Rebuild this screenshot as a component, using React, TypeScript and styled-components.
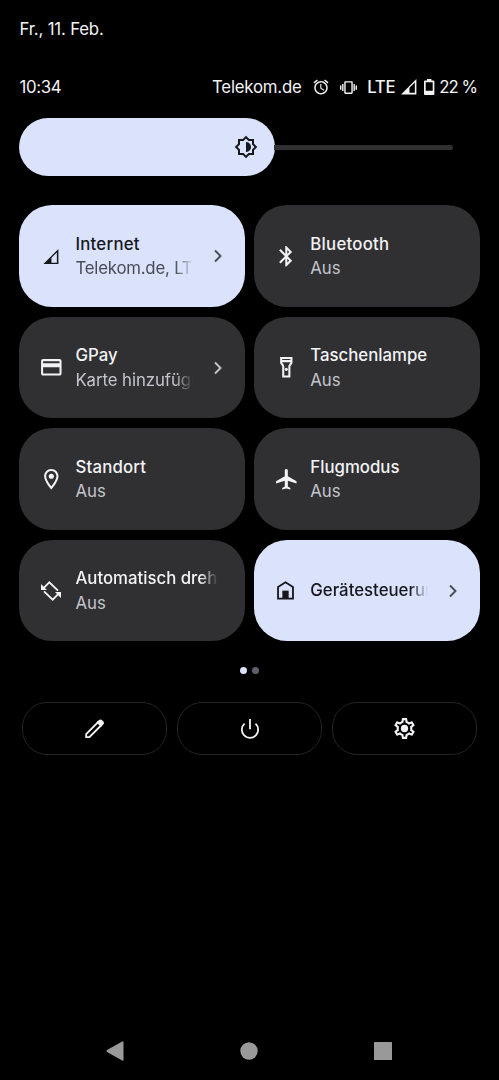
import React from "react";
import styled, { createGlobalStyle } from "styled-components";

const color = {
  accent: "#dae2fc",
  tile: "#303032",
  text: "#f3f3f5",
  muted: "#c4c4ce",
  dark: "#17181c",
  darkMuted: "#494c55",
  nav: "#999999",
};

const Global = createGlobalStyle`
  html, body { margin: 0; background: #000; }
  * { box-sizing: border-box; }
`;

const Screen = styled.main`
  display: flex;
  flex-direction: column;
  width: 499px;
  height: 1080px;
  overflow: hidden;
  background: #000;
  color: ${color.text};
  font-family: Inter, Roboto, sans-serif;
  font-size: 16.8px;
`;

const Label = styled.span<{ $spacing?: number }>`
  letter-spacing: ${(p) => p.$spacing ?? 0}px;
  white-space: nowrap;
`;

const DateRow = styled.header`
  height: 58px;
  padding: 0 19.5px;
  line-height: 58px;
`;

const StatusRow = styled.div`
  display: flex;
  align-items: center;
  justify-content: space-between;
  height: 58px;
  padding: 0 22px 0 19.5px;
`;

const StatusIcons = styled.div`
  display: flex;
  align-items: center;
`;

const Gap = styled.i<{ $w: number }>`
  flex: none;
  width: ${(p) => p.$w}px;
`;

const Slider = styled.div`
  display: flex;
  align-items: center;
  height: 58px;
  margin: 2.3px 46px 0 19.3px;
`;

const SliderFill = styled.div`
  display: flex;
  align-items: center;
  justify-content: flex-end;
  width: 256px;
  height: 58px;
  padding-right: 17px;
  border-radius: 29px;
  background: ${color.accent};
  color: ${color.dark};
`;

const SliderTrack = styled.div`
  flex: 1;
  height: 5px;
  margin-left: -1px;
  border-radius: 0 3px 3px 0;
  background: #303030;
`;

const Tiles = styled.section`
  display: grid;
  grid-template-columns: 1fr 1fr;
  grid-auto-rows: 101.5px;
  gap: 10px 9.6px;
  margin: 29.2px 19.4px 0;
`;

const TileBox = styled.div<{ $on?: boolean }>`
  display: flex;
  align-items: center;
  min-width: 0;
  padding: 0 18px 0 19px;
  border-radius: 33px;
  background: ${(p) => (p.$on ? color.accent : color.tile)};
  color: ${(p) => (p.$on ? color.dark : color.text)};
`;

const IconSlot = styled.div`
  display: flex;
  flex: none;
  justify-content: center;
  width: 25px;
  margin-right: 12px;
`;

const TileText = styled.div<{ $chevron?: boolean }>`
  display: flex;
  flex: none;
  flex-direction: column;
  width: ${(p) => (p.$chevron ? 118 : 143)}px;
`;

const Line = styled.div<{ $fade?: boolean; $title?: boolean; $on?: boolean }>`
  overflow: hidden;
  height: 24.6px;
  font-size: 16.8px;
  line-height: 24.6px;
  font-weight: ${(p) => (p.$title ? 500 : 400)};
  color: ${(p) => (p.$title ? "inherit" : p.$on ? color.darkMuted : color.muted)};
  mask-image: ${(p) => (p.$fade ? "linear-gradient(to right, #000 calc(100% - 18px), transparent)" : "none")};
`;

const Chevron = styled.svg<{ $on?: boolean }>`
  width: 8px;
  height: 14px;
  margin-left: auto;
  margin-right: 4.5px;
  fill: none;
  stroke: ${(p) => (p.$on ? color.darkMuted : color.muted)};
  stroke-width: 1.9px;
`;

const Pager = styled.div`
  display: flex;
  justify-content: center;
  gap: 4.6px;
  margin-top: 25.8px;
`;

const Dot = styled.i<{ $active?: boolean }>`
  width: 7px;
  height: 7px;
  border-radius: 50%;
  background: ${(p) => (p.$active ? color.accent : "#5f606c")};
`;

const Actions = styled.div`
  display: grid;
  grid-template-columns: repeat(3, 1fr);
  gap: 10px;
  margin: 28px 22px 0;
`;

const Action = styled.div`
  display: flex;
  align-items: center;
  justify-content: center;
  height: 53px;
  border: 1px solid #242424;
  border-radius: 25px;
`;

const NavBar = styled.nav`
  display: flex;
  align-items: center;
  justify-content: space-between;
  height: 58px;
  margin-top: auto;
  padding: 0 106.5px 0 105.5px;
  fill: ${color.nav};
`;

const Glyph = ({ d, size = 24.6, children }: { d?: string; size?: number; children?: React.ReactNode }) => (
  <svg width={size} height={size} viewBox="0 0 24 24" fill="currentColor">
    {d && <path fillRule="evenodd" d={d} />}
    {children}
  </svg>
);

const paths = {
  brightness:
    "M20 15.31L23.31 12 20 8.69V4h-4.69L12 .69 8.69 4H4v4.69L.69 12 4 15.31V20h4.69L12 23.31 15.31 20H20v-4.69zM18 14.48V18h-3.52L12 20.48 9.52 18H6v-3.52L3.52 12 6 9.52V6h3.52L12 3.52 14.48 6H18v3.52L20.48 12 18 14.48zM12 7v10c2.76 0 5-2.24 5-5s-2.24-5-5-5z",
  bluetooth:
    "M17.71 7.71L12 2h-1v7.59L6.41 5 5 6.41 10.59 12 5 17.59 6.41 19 11 14.41V22h1l5.71-5.71-4.3-4.29 4.3-4.29zM13 5.83l1.88 1.88L13 9.59V5.83zm1.88 10.46L13 18.17v-3.76l1.88 1.88z",
  card: "M20 4H4c-1.11 0-1.99.89-1.99 2L2 18c0 1.11.89 2 2 2h16c1.11 0 2-.89 2-2V6c0-1.11-.89-2-2-2zm0 14H4v-6h16v6zm0-10H4V6h16v2z",
  torch: "M18 2H6v6l2 3v11h8V11l2-3V2zm-2 2v1H8V4h8zm-2 6.4V20h-4v-9.6L8 7.39V7h8v.39l-2 3.01z",
  pin: "M12 2C8.13 2 5 5.13 5 9c0 5.25 7 13 7 13s7-7.75 7-13c0-3.87-3.13-7-7-7zM7 9c0-2.76 2.24-5 5-5s5 2.24 5 5c0 2.88-2.88 7.19-5 9.88C9.92 16.21 7 11.85 7 9z",
  plane:
    "M22 16v-2l-8.5-5V3.5c0-.83-.67-1.5-1.5-1.5s-1.5.67-1.5 1.5V9L2 14v2l8.5-2.5V19L8 20.5V22l4-1 4 1v-1.5L13.5 19v-5.5L22 16z",
  alarm:
    "M22 5.72l-4.6-3.86-1.29 1.53 4.6 3.86L22 5.72zM7.88 3.39L6.6 1.86 2 5.71l1.29 1.53 4.59-3.85zM12.5 8H11v6l4.75 2.85.75-1.23-4-2.37V8zM12 4c-4.97 0-9 4.03-9 9s4.02 9 9 9c4.97 0 9-4.03 9-9s-4.03-9-9-9zm0 16c-3.87 0-7-3.13-7-7s3.13-7 7-7 7 3.13 7 7-3.13 7-7 7z",
  vibrate:
    "M0 15h2V9H0v6zm3 2h2V7H3v10zm19-8v6h2V9h-2zm-3 8h2V7h-2v10zM16.5 3h-9C6.67 3 6 3.67 6 4.5v15c0 .83.67 1.5 1.5 1.5h9c.83 0 1.5-.67 1.5-1.5v-15c0-.83-.67-1.5-1.5-1.5zM16 19H8V5h8v14z",
  gear: "M19.43 12.98c.04-.32.07-.64.07-.98 0-.34-.03-.66-.07-.98l2.11-1.65c.19-.15.24-.42.12-.64l-2-3.46c-.09-.16-.26-.25-.44-.25-.06 0-.12.01-.17.03l-2.49 1c-.52-.4-1.08-.73-1.69-.98l-.38-2.65C14.46 2.18 14.25 2 14 2h-4c-.25 0-.46.18-.49.42l-.38 2.65c-.61.25-1.17.59-1.69.98l-2.49-1c-.06-.02-.12-.03-.18-.03-.17 0-.34.09-.43.25l-2 3.46c-.13.22-.07.49.12.64l2.11 1.65c-.04.32-.07.65-.07.98 0 .33.03.66.07.98l-2.11 1.65c-.19.15-.24.42-.12.64l2 3.46c.09.16.26.25.44.25.06 0 .12-.01.17-.03l2.49-1c.52.4 1.08.73 1.69.98l.38 2.65c.03.24.24.42.49.42h4c.25 0 .46-.18.49-.42l.38-2.65c.61-.25 1.17-.59 1.69-.98l2.49 1c.06.02.12.03.18.03.17 0 .34-.09.43-.25l2-3.46c.12-.22.07-.49-.12-.64l-2.11-1.65zm-1.98-1.71c.04.31.05.52.05.73 0 .21-.02.43-.05.73l-.14 1.13.89.7 1.08.84-.7 1.21-1.27-.51-1.04-.42-.9.68c-.43.32-.84.56-1.25.73l-1.06.43-.16 1.13-.2 1.35h-1.4l-.19-1.35-.16-1.13-1.06-.43c-.43-.18-.83-.41-1.23-.71l-.91-.7-1.06.43-1.27.51-.7-1.21 1.08-.84.89-.7-.14-1.13c-.03-.31-.05-.54-.05-.74s.02-.43.05-.73l.14-1.13-.89-.7-1.08-.84.7-1.21 1.27.51 1.04.42.9-.68c.43-.32.84-.56 1.25-.73l1.06-.43.16-1.13.2-1.35h1.39l.19 1.35.16 1.13 1.06.43c.43.18.83.41 1.23.71l.91.7 1.06-.43 1.27-.51.7 1.21-1.07.85-.89.7.14 1.13z",
};

const SignalIcon = () => (
  <svg width="15.4" height="15.4" viewBox="0 0 20 20">
    <path fill="currentColor" fillRule="evenodd" d="M0 20L20 0V20ZM11 11.3V18H18V4.6Z" />
  </svg>
);

const BatteryIcon = () => (
  <svg width="10.4" height="16" viewBox="0 0 10.4 16" fill="currentColor">
    <path
      fillRule="evenodd"
      d="M3 0h4.4v1.6h2a1 1 0 0 1 1 1V15a1 1 0 0 1-1 1H1a1 1 0 0 1-1-1V2.6a1 1 0 0 1 1-1h2zM1.7 3.3V11.7h7V3.3z"
    />
  </svg>
);

const RotateIcon = () => (
  <svg width="20" height="20" viewBox="0 0 60 60" fill="none" stroke="currentColor" strokeWidth="5.5">
    <path d="M7 22L25 4L51 29M9 31L35 56L53 38" />
    <path fill="currentColor" stroke="none" d="M0 9V27H18ZM60 51V33H42Z" />
  </svg>
);

const HomeIcon = () => (
  <svg width="17" height="18.6" viewBox="0 0 51 56" fill="none" stroke="currentColor" strokeWidth="5.5">
    <path d="M3 18L25.5 4L48 18V53H3Z" />
    <path fill="currentColor" stroke="none" d="M16 29H35V54H16Z" />
  </svg>
);

const PencilIcon = () => (
  <svg width="19.4" height="19.4" viewBox="0 0 58 58" fill="none" stroke="currentColor" strokeWidth="5.5">
    <path d="M3.5 54.5V45L38.500 10L48 19.500L13 54.500Z" />
    <path fill="currentColor" stroke="none" d="M34.5 10L42 3Q46.500-.5 50.500 3L55 7.500Q58.500 11.500 55 16L48 23.500Z" />
  </svg>
);

const PowerIcon = () => (
  <svg width="20" height="20" viewBox="0 0 60 60" fill="none" stroke="currentColor" strokeWidth="5.5">
    <path d="M30 0V31M13.5 14A24.5 24.5 0 1 0 46.5 14" />
  </svg>
);

type TileProps = {
  icon: React.ReactNode;
  title: string;
  subtitle?: string;
  on?: boolean;
  chevron?: boolean;
  fadeTitle?: boolean;
  fadeSubtitle?: boolean;
  titleSpacing?: number;
  subtitleSpacing?: number;
};

const Tile = (p: TileProps) => (
  <TileBox $on={p.on}>
    <IconSlot>{p.icon}</IconSlot>
    <TileText $chevron={p.chevron}>
      <Line $title $fade={p.fadeTitle}>
        <Label $spacing={p.titleSpacing}>{p.title}</Label>
      </Line>
      {p.subtitle && (
        <Line $on={p.on} $fade={p.fadeSubtitle}>
          <Label $spacing={p.subtitleSpacing}>{p.subtitle}</Label>
        </Line>
      )}
    </TileText>
    {p.chevron && (
      <Chevron $on={p.on} viewBox="0 0 8 14">
        <path d="M1 1.5L6.5 7L1 12.5" />
      </Chevron>
    )}
  </TileBox>
);

export default function App() {
  return (
    <Screen>
      <Global />
      <DateRow>
        <Label $spacing={-0.18}>Fr., 11. Feb.</Label>
      </DateRow>
      <StatusRow>
        <Label $spacing={-0.35}>10:34</Label>
        <StatusIcons>
          <Label $spacing={-0.2}>Telekom.de</Label>
          <Gap $w={10} />
          <Glyph d={paths.alarm} size={18} />
          <Gap $w={10} />
          <Glyph d={paths.vibrate} size={17} />
          <Gap $w={10.5} />
          <Line as="span" $title>
            <Label $spacing={-0.2}>LTE</Label>
          </Line>
          <Gap $w={5.8} />
          <SignalIcon />
          <Gap $w={7.5} />
          <BatteryIcon />
          <Gap $w={4.5} />
          <Label $spacing={-0.95}>22 %</Label>
        </StatusIcons>
      </StatusRow>
      <Slider>
        <SliderFill>
          <Glyph d={paths.brightness} size={24} />
        </SliderFill>
        <SliderTrack />
      </Slider>
      <Tiles>
        <Tile
          on
          chevron
          fadeSubtitle
          icon={<SignalIcon />}
          title="Internet"
          titleSpacing={0.25}
          subtitle="Telekom.de, LTE"
          subtitleSpacing={-0.2}
        />
        <Tile icon={<Glyph d={paths.bluetooth} />} title="Bluetooth" titleSpacing={0.25} subtitle="Aus" />
        <Tile
          chevron
          fadeSubtitle
          icon={<Glyph d={paths.card} />}
          title="GPay"
          subtitle="Karte hinzufügen"
          subtitleSpacing={-0.07}
        />
        <Tile
          icon={
            <Glyph d={paths.torch}>
              <circle cx="12" cy="14" r="1.5" />
            </Glyph>
          }
          title="Taschenlampe"
          subtitle="Aus"
        />
        <Tile
          icon={
            <Glyph d={paths.pin}>
              <circle cx="12" cy="9" r="2.5" />
            </Glyph>
          }
          title="Standort"
          titleSpacing={0.2}
          subtitle="Aus"
        />
        <Tile icon={<Glyph d={paths.plane} />} title="Flugmodus" subtitle="Aus" />
        <Tile fadeTitle icon={<RotateIcon />} title="Automatisch drehen" subtitle="Aus" />
        <Tile on chevron fadeTitle icon={<HomeIcon />} title="Gerätesteuerung" />
      </Tiles>
      <Pager>
        <Dot $active />
        <Dot />
      </Pager>
      <Actions>
        <Action>
          <PencilIcon />
        </Action>
        <Action>
          <PowerIcon />
        </Action>
        <Action>
          <Glyph d={paths.gear} size={25}>
            <circle cx="12" cy="12" r="3.5" />
          </Glyph>
        </Action>
      </Actions>
      <NavBar>
        <svg width="18" height="20" viewBox="0 0 18 20">
          <path d="M1 9.1L16.2.4Q17.5-.2 17.5 1V19Q17.5 20.2 16.2 19.6L1 10.9Q0 10 1 9.1Z" />
        </svg>
        <svg width="18" height="18" viewBox="0 0 18 18">
          <circle cx="9" cy="9" r="8.7" />
        </svg>
        <svg width="18.4" height="18.4" viewBox="0 0 18 18">
          <rect width="18" height="18" rx="1" />
        </svg>
      </NavBar>
    </Screen>
  );
}
